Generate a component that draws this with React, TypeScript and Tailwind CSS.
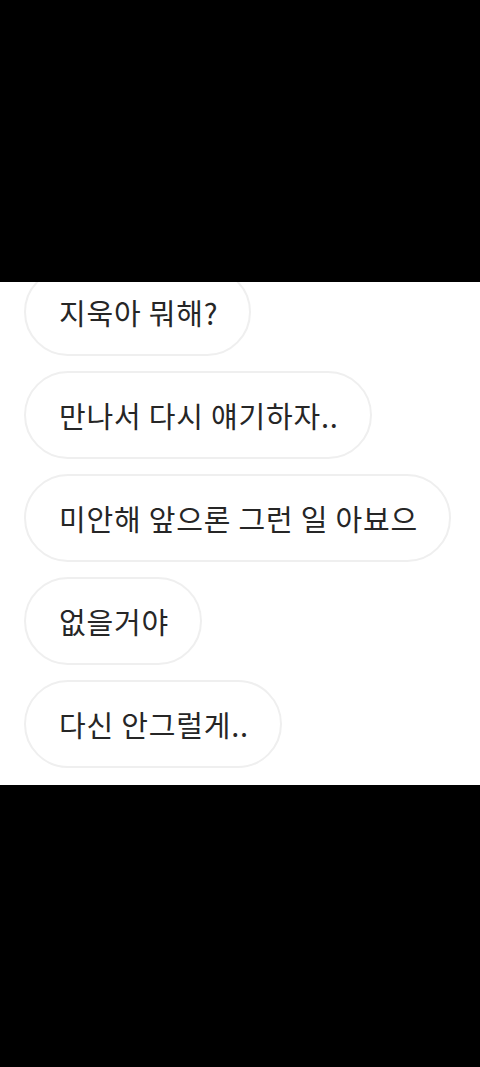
const messages = [
  "지욱아 뭐해?",
  "만나서 다시 얘기하자..",
  "미안해 앞으론 그런 일 아뵤으",
  "없을거야",
  "다신 안그럴게..",
];

const App = () => {
  return (
    <div className="flex min-h-screen flex-col bg-black font-['Noto_Sans_CJK_KR','Noto_Sans',sans-serif]">
      <div className="h-[282px] shrink-0" />
      <div className="h-[503px] shrink-0 overflow-hidden bg-white">
        <div className="-mt-[14px] flex flex-col items-start gap-[15px] px-[24px]">
          {messages.map((m) => (
            <div
              key={m}
              className="flex h-[88px] items-center whitespace-nowrap rounded-full border-2 border-[#efefef] pl-[33px] pr-[31px] text-[29px] leading-none tracking-[0.8px] text-[#262626]"
            >
              {m}
            </div>
          ))}
        </div>
      </div>
      <div className="flex-1" />
    </div>
  );
};

export default App;
